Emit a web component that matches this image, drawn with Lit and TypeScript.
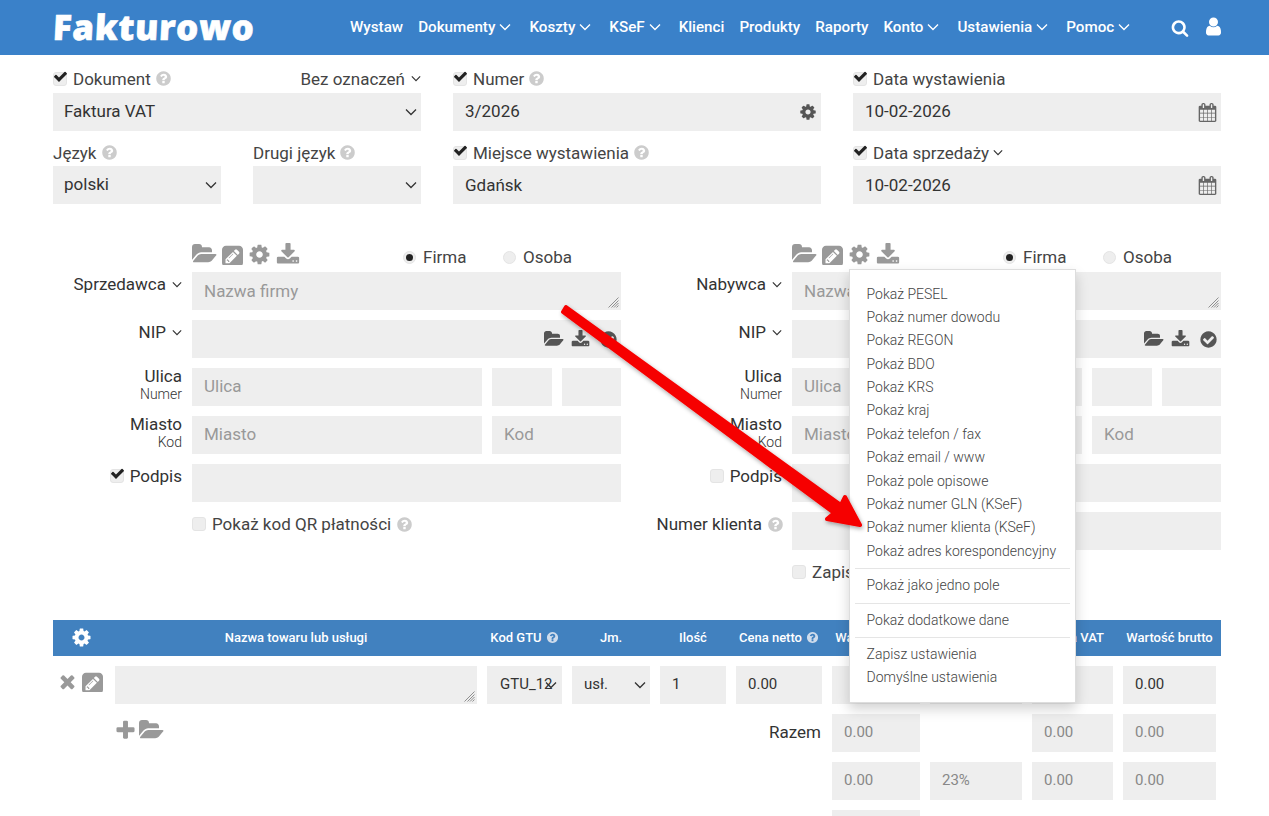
import { LitElement, html, css, svg } from 'lit';
import { customElement } from 'lit/decorators.js';

const P = {
  cog: 'M1152 896q0-106-75-181t-181-75-181 75-75 181 75 181 181 75 181-75 75-181zm512-109v222q0 12-8 23t-20 13l-185 28q-19 54-39 91 35 50 107 138 10 12 10 25t-9 23q-27 37-99 108t-94 71q-12 0-26-9l-138-108q-44 23-91 38-16 136-29 186-7 28-36 28h-222q-14 0-24.500-8.500t-11.500-21.500l-28-184q-49-16-90-37l-141 107q-10 9-25 9-14 0-25-11-126-114-165-168-7-10-7-23 0-12 8-23 15-21 51-66.500t54-70.500q-27-50-41-99l-183-27q-13-2-21-12.500t-8-23.500v-222q0-12 8-23t19-13l186-28q14-46 39-92-40-57-107-138-10-12-10-24 0-10 9-23 26-36 98.500-107.500t94.500-71.500q13 0 26 10l138 107q44-23 91-38 16-136 29-186 7-28 36-28h222q14 0 24.500 8.500t11.500 21.500l28 184q49 16 90 37l142-107q9-9 24-9 13 0 25 10 129 119 165 170 7 8 7 22 0 12-8 23-15 21-51 66.500t-54 70.500q26 50 41 98l183 28q13 2 21 12.500t8 23.500z',
  folder: 'M1879 952q0 31-31 66l-336 396q-43 51-120.500 86.500t-143.500 35.500h-1088q-34 0-60.500-13t-26.500-43q0-31 31-66l336-396q43-51 120.500-86.500t143.500-35.500h1088q34 0 60.500 13t26.500 43zm-343-344v160h-832q-94 0-197 47.500t-164 119.500l-337 396-5 6q0-4-.5-12.500t-.5-12.500v-960q0-92 66-158t158-66h320q92 0 158 66t66 158v32h544q92 0 158 66t66 158z',
  pencil: 'M404 1108l152 152-52 52h-56v-96h-96v-56zm414-390q14 13-3 30l-291 291q-17 17-30 3-14-13 3-30l291-291q17-17 30-3zm-274 690l544-544-288-288-544 544v288h288zm608-608l92-92q28-28 28-68t-28-68l-152-152q-28-28-68-28t-68 28l-92 92zm384-384v960q0 119-84.500 203.500t-203.500 84.500h-960q-119 0-203.500-84.500t-84.500-203.500v-960q0-119 84.500-203.500t203.500-84.500h960q119 0 203.500 84.500t84.500 203.500z',
  download: 'M1344 1344q0-26-19-45t-45-19-45 19-19 45 19 45 45 19 45-19 19-45zm256 0q0-26-19-45t-45-19-45 19-19 45 19 45 45 19 45-19 19-45zm128-224v320q0 40-28 68t-68 28h-1472q-40 0-68-28t-28-68v-320q0-40 28-68t68-28h465l135 136q58 56 136 56t136-56l136-136h464q40 0 68 28t28 68zm-325-569q17 41-14 70l-448 448q-18 19-45 19t-45-19l-448-448q-31-29-14-70 17-39 59-39h256v-448q0-26 19-45t45-19h256q26 0 45 19t19 45v448h256q42 0 59 39z',
  ok: 'M1412 734q0-28-18-46l-91-90q-19-19-45-19t-45 19l-408 407-226-226q-19-19-45-19t-45 19l-91 90q-18 18-18 46 0 27 18 45l362 362q19 19 45 19 27 0 46-19l543-543q18-18 18-45zm252 162q0 209-103 385.500t-279.500 279.500-385.500 103-385.500-103-279.500-279.500-103-385.500 103-385.500 279.500-279.500 385.500-103 385.500 103 279.500 279.500 103 385.500z',
  help: 'M1024 1376v-192q0-14-9-23t-23-9h-192q-14 0-23 9t-9 23v192q0 14 9 23t23 9h192q14 0 23-9t9-23zm256-672q0-88-55.500-163t-138.500-116-170-41q-243 0-371 213-15 24 8 42l132 100q7 6 19 6 16 0 25-12 53-68 86-92 34-24 86-24 48 0 85.500 26t37.500 59q0 38-20 61t-68 45q-63 28-115.500 86.500t-52.500 125.500v36q0 14 9 23t23 9h192q14 0 23-9t9-23q0-19 21.500-49.500t54.500-49.500q32-18 49-28.500t46-35 44.500-48 28-60.500 12.500-81zm384 192q0 209-103 385.500t-279.500 279.500-385.500 103-385.500-103-279.500-279.500-103-385.500 103-385.500 279.500-279.500 385.500-103 385.500 103 279.500 279.500 103 385.500z',
  search: 'M1216 832q0-185-131.500-316.500t-316.500-131.500-316.500 131.500-131.500 316.500 131.500 316.500 316.500 131.500 316.500-131.500 131.500-316.500zm512 832q0 52-38 90t-90 38q-54 0-90-38l-343-342q-179 124-399 124-143 0-273.500-55.500t-225-150-150-225-55.500-273.500 55.500-273.500 150-225 225-150 273.500-55.500 273.500 55.500 225 150 150 225 55.500 273.500q0 220-124 399l343 343q37 37 37 90z',
  user: 'M1536 1399q0 109-62.500 187t-150.500 78h-854q-88 0-150.500-78t-62.500-187q0-85 8.500-160.500t31.500-152 58.500-131 94-89 134.500-34.500q131 128 313 128t313-128q76 0 134.500 34.500t94 89 58.500 131 31.500 152 8.500 160.500zm-256-887q0 159-112.500 271.500t-271.500 112.500-271.500-112.500-112.500-271.500 112.500-271.500 271.500-112.500 271.500 112.500 112.500 271.500z',
  times: 'M1490 1322q0 40-28 68l-136 136q-28 28-68 28t-68-28l-294-294-294 294q-28 28-68 28t-68-28l-136-136q-28-28-28-68t28-68l294-294-294-294q-28-28-28-68t28-68l136-136q28-28 68-28t68 28l294 294 294-294q28-28 68-28t68 28l136 136q28 28 28 68t-28 68l-294 294 294 294q28 28 28 68z',
  plus: 'M1600 736v192q0 40-28 68t-68 28h-416v416q0 40-28 68t-68 28h-192q-40 0-68-28t-28-68v-416h-416q-40 0-68-28t-28-68v-192q0-40 28-68t68-28h416v-416q0-40 28-68t68-28h192q40 0 68 28t28 68v416h416q40 0 68 28t28 68z',
  calendar: 'M192 1664h288v-288h-288v288zm352 0h320v-288h-320v288zm-352-352h288v-320h-288v320zm352 0h320v-320h-320v320zm-352-384h288v-288h-288v288zm736 736h320v-288h-320v288zm-384-736h320v-288h-320v288zm768 736h288v-288h-288v288zm-384-352h320v-320h-320v320zm-352-864v-288q0-13-9.500-22.500t-22.500-9.500h-64q-13 0-22.500 9.500t-9.500 22.500v288q0 13 9.500 22.500t22.500 9.500h64q13 0 22.500-9.500t9.500-22.500zm736 864h288v-320h-288v320zm-384-384h320v-288h-320v288zm384 0h288v-288h-288v288zm32-480v-288q0-13-9.500-22.500t-22.500-9.500h-64q-13 0-22.500 9.500t-9.500 22.500v288q0 13 9.500 22.500t22.500 9.500h64q13 0 22.500-9.500t9.500-22.500zm384-64v1280q0 52-38 90t-90 38h-1408q-52 0-90-38t-38-90v-1280q0-52 38-90t90-38h128v-96q0-66 47-113t113-47h64q66 0 113 47t47 113v96h384v-96q0-66 47-113t113-47h64q66 0 113 47t47 113v96h128q52 0 90 38t38 90z',
  check: 'M1671 566q0 40-28 68l-724 724-136 136q-28 28-68 28t-68-28l-136-136-362-362q-28-28-28-68t28-68l136-136q28-28 68-28t68 28l294 295 656-657q28-28 68-28t68 28l136 136q28 28 28 68z',
};

const VB: Record<string, string> = { folder: '0 128 1920 1536', pencil: '0 0 1536 1536' };

const icon = (name: keyof typeof P, cls = '') =>
  html`<svg class="ic ${cls}" viewBox=${VB[name] ?? '0 0 1792 1792'} aria-hidden="true"><path d=${P[name]}></path></svg>`;

const chev = (cls = '') =>
  html`<svg class="chev ${cls}" viewBox="0 0 12 8" aria-hidden="true"><path d="M1 1.500 6 6.500 11 1.500" fill="none" stroke="currentColor" stroke-width="1.400"></path></svg>`;

const help = () => icon('help', 'help');

const check = (on: boolean) =>
  html`<span class="box">${on ? icon('check', 'tick') : ''}</span>`;

// textarea with the hatched resize grip of the original
const area = (placeholder = '') => html`
  <div class="ta">
    <textarea placeholder=${placeholder}></textarea>
    <svg class="grip" viewBox="0 0 11 11" aria-hidden="true">
      <path d="M10.500 .5 .5 10.500M10.500 3.500 3.500 10.500M10.500 6 6 10.500M10.500 8.500 8.500 10.500" fill="none" stroke="#777" stroke-width=".8"></path>
    </svg>
  </div>
`;

const NAV: [string, boolean][] = [
  ['Wystaw', false], ['Dokumenty', true], ['Koszty', true], ['KSeF', true], ['Klienci', false],
  ['Produkty', false], ['Raporty', false], ['Konto', true], ['Ustawienia', true], ['Pomoc', true],
];

const MENU = [
  ['Pokaż PESEL', 'Pokaż numer dowodu', 'Pokaż REGON', 'Pokaż BDO', 'Pokaż KRS', 'Pokaż kraj', 'Pokaż telefon / fax',
    'Pokaż email / www', 'Pokaż pole opisowe', 'Pokaż numer GLN (KSeF)', 'Pokaż numer klienta (KSeF)', 'Pokaż adres korespondencyjny'],
  ['Pokaż jako jedno pole'],
  ['Pokaż dodatkowe dane'],
  ['Zapisz ustawienia', 'Domyślne ustawienia'],
];

@customElement('app-root')
export class AppRoot extends LitElement {
  static styles = css`
    :host {
      display: block;
      position: relative;
      height: 816px;
      overflow: hidden;
      background: #fff;
      color: #333;
      font-family: Roboto, 'Liberation Sans', sans-serif;
      font-size: 17px;
    }
    * { box-sizing: border-box; }
    .ic { display: block; fill: currentColor; flex: none; }
    .chev { width: 11px; height: 7px; flex: none; }
    .chev.sm { width: 10px; height: 7px; margin-left: 4px; color: #333; }

    header {
      height: 55px;
      background: #3a81c9;
      color: #fff;
      display: flex;
      align-items: center;
      padding: 0 48px 0 53px;
    }
    .logo {
      width: 297px;
      font-family: 'Open Sans', sans-serif;
      font-weight: 800;
      font-size: 35px;
      letter-spacing: 0.6px;
      -webkit-text-stroke: 0.6px #fff;
      line-height: 55px;
      margin-top: -2px;
      transform: skewX(-3deg);
    }
    nav { display: flex; gap: 15px; font-size: 15.2px; font-weight: 500; margin-top: -2px; }
    nav a { display: flex; align-items: center; gap: 4px; }
    nav .chev { width: 12px; height: 8px; margin-right: 3px; }
    .tools { margin-left: auto; margin-right: -3px; display: flex; gap: 14px; align-items: center; }
    .tools .search { width: 18px; height: 18px; margin-top: 1px; }
    .tools .user { width: 21px; height: 21px; margin-top: -2px; }

    main { padding: 13px 48px 0 53px; }
    .top { display: grid; grid-template-columns: repeat(3, 368px); column-gap: 32px; row-gap: 10px; }
    .split { display: grid; grid-template-columns: 168px 168px; column-gap: 32px; }
    .lab {
      height: 25px;
      display: flex;
      align-items: center;
      gap: 6px;
      line-height: 22px;
      color: #444;
      padding-bottom: 2px;
    }
    .first .lab { padding-bottom: 4px; }
    .second input { padding-bottom: 0; }
    .lab .end { margin-left: auto; display: flex; align-items: center; }
    .lab .end .chev.sm { margin-left: 6px; }
    .lab > .chev.sm { margin-left: -2px; }
    .help { width: 17px; height: 17px; color: #ccc; }
    .lab .help { margin-left: -2px; }

    .box {
      position: relative;
      display: inline-block;
      width: 14px;
      height: 14px;
      border-radius: 3px;
      background: #eee;
      border: 1px solid #e4e4e4;
      flex: none;
    }
    .tick { position: absolute; left: -1px; top: -4px; width: 15px; height: 15px; color: #222; }

    input, select, textarea {
      display: block;
      width: 100%;
      height: 38px;
      border: 0;
      border-radius: 0;
      outline: 0;
      margin: 0;
      background-color: #eee;
      color: #333;
      font: inherit;
      padding: 0 12px 2px;
    }
    ::placeholder { color: #999; opacity: 1; }
    select {
      appearance: none;
      padding-left: 11px;
      background-image: url("data:image/svg+xml,%3Csvg xmlns='http://www.w3.org/2000/svg' width='12' height='8'%3E%3Cpath d='M1 1.500 6 6.500 11 1.500' fill='none' stroke='%23333' stroke-width='1.300'/%3E%3C/svg%3E");
      background-repeat: no-repeat;
      background-position: right 4px center;
    }
    textarea { resize: none; padding-top: 8px; line-height: 22px; vertical-align: top; }
    .ta { position: relative; height: 38px; }
    .grip { position: absolute; right: 2px; bottom: 2px; width: 11px; height: 11px; }

    .wrap { position: relative; }
    .wrap input { padding-right: 40px; }
    .wrap .inner {
      position: absolute;
      right: 4px;
      top: 0;
      height: 38px;
      display: flex;
      align-items: center;
      gap: 9px;
    }
    .wrap .inner.nip { right: 3px; }
    .gear { width: 18px; height: 18px; color: #555; }
    .cal { width: 19px; height: 19px; color: #666; }
    .inner .folder { width: 20px; height: 16px; color: #555; margin-right: -2px; }
    .inner .dl { width: 19px; height: 19px; color: #555; }
    .inner .ok { width: 19px; height: 19px; color: #555; }

    .parties {
      display: grid;
      grid-template-columns: 568px 568px;
      column-gap: 32px;
      margin-top: 36px;
    }
    .party {
      position: relative;
      display: grid;
      grid-template-columns: 129px 429px;
      column-gap: 10px;
      row-gap: 10px;
      align-content: start;
    }
    .tb-ic { display: flex; align-items: center; gap: 5px; width: 211px; height: 32px; padding-bottom: 4px; color: #999; }
    .tb-ic .folder { width: 25px; height: 20px; }
    .tb-ic .pen { width: 21px; height: 21px; }
    .tb-ic .cog { width: 23px; height: 23px; }
    .tb-ic .dl { width: 24px; height: 24px; margin-top: 1px; }
    .tb-row { height: 32px; margin-bottom: -10px; display: flex; align-items: center; grid-column: 2; }
    .radio-g { display: flex; align-items: center; gap: 7px; width: 100px; color: #444; padding-top: 2px; }
    .radio {
      width: 13px;
      height: 13px;
      border-radius: 50%;
      background: #eee;
      border: 1px solid #e4e4e4;
      display: flex;
      align-items: center;
      justify-content: center;
    }
    .radio.on::after { content: ''; width: 7px; height: 7px; border-radius: 50%; background: #222; }

    .rl {
      text-align: right;
      line-height: 24px;
      display: flex;
      flex-direction: column;
      align-items: flex-end;
    }
    .rl .ln { display: flex; align-items: center; gap: 6px; height: 24px; white-space: nowrap; }
    .rl .ln .sm { margin-left: 0; }
    .rl .help { margin: 0 -2px 0 -1px; }
    .rl.two .ln { margin-top: -4px; }
    .rl small { font-size: 14px; font-weight: 300; line-height: 12px; color: #333; }
    .cols { display: grid; column-gap: 10px; }
    .c-ulica { grid-template-columns: 290px 60px 59px; }
    .c-miasto { grid-template-columns: 290px 129px; }
    .row-check { display: flex; align-items: center; gap: 6px; height: 24px; color: #444; }
    .row-check .help { margin-left: -1px; }

    .menu {
      position: absolute;
      left: 195.500px;
      top: 29px;
      width: 227px;
      height: 434px;
      background: #fff;
      border: 1px solid #ddd;
      box-shadow: 0 6px 12px rgba(0, 0, 0, 0.18);
      padding: 12.500px 5px 13px;
      font-size: 14px;
      font-weight: 300;
      color: #444;
      z-index: 2;
    }
    .menu .it { height: 23.400px; line-height: 23.400px; padding-left: 12px; white-space: nowrap; }
    .menu hr { border: 0; border-top: 1px solid #e5e5e5; margin: 5px 0; }

    .tbl { margin-top: 36px; }
    .th, .tr {
      display: grid;
      grid-template-columns: 52px 362px 75px 78px 66px 86px 88px 92px 81px 93px;
      column-gap: 10px;
      padding-right: 5px;
    }
    .th {
      height: 36px;
      background: #4181bf;
      color: #fff;
      font-size: 13px;
      font-weight: 500;
      align-items: center;
      text-align: center;
      margin-bottom: 10px;
      padding-bottom: 1px;
    }
    .th > div { display: flex; justify-content: center; align-items: center; gap: 4px; white-space: nowrap; }
    .th .help { width: 13px; height: 13px; color: #cfdcec; }
    .th .cog { width: 21px; height: 21px; margin-left: 5px; }
    .tr { margin-bottom: 10px; align-items: start; }
    .tr input { font-size: 15px; }
    .tr input.dim { color: #888; }
    .tr select { padding: 0 12px 2px; font-size: 15px; }
    .tr select.tiny { padding: 0 0 2px 13px; background-position: right 5px center; }
    .row-ic { display: flex; align-items: center; gap: 4px; padding: 5px 0 0 4px; color: #999; }
    .row-ic .x { width: 21px; height: 21px; }
    .row-ic .pen { width: 21px; height: 21px; }
    .add { display: flex; align-items: center; gap: 2px; color: #999; height: 32px; }
    .add .pl { width: 23px; height: 23px; margin-left: -1px; }
    .add .folder { width: 25px; height: 20px; }
    .razem { text-align: right; line-height: 36px; padding-right: 1px; }

    .arrow { position: absolute; inset: 0; width: 1269px; height: 816px; pointer-events: none; z-index: 3; }
  `;

  private party(side: 'l' | 'r') {
    const left = side === 'l';
    return html`
      <section class="party">
        <div class="tb-row">
          <div class="tb-ic">
            ${icon('folder', 'folder')}${icon('pencil', 'pen')}${icon('cog', 'cog')}${icon('download', 'dl')}
          </div>
          <label class="radio-g"><span class="radio on"></span>Firma</label>
          <label class="radio-g"><span class="radio"></span>Osoba</label>
        </div>

        <div class="rl"><span class="ln">${left ? 'Sprzedawca' : 'Nabywca'}${chev('sm')}</span></div>
        ${area('Nazwa firmy')}

        <div class="rl"><span class="ln">NIP${chev('sm')}</span></div>
        <div class="wrap">
          <input />
          <div class="inner nip">${icon('folder', 'folder')}${icon('download', 'dl')}${icon('ok', 'ok')}</div>
        </div>

        <div class="rl two"><span class="ln">Ulica</span><small>Numer</small></div>
        <div class="cols c-ulica"><input placeholder="Ulica" /><input /><input /></div>

        <div class="rl two"><span class="ln">Miasto</span><small>Kod</small></div>
        <div class="cols c-miasto"><input placeholder="Miasto" /><input placeholder="Kod" /></div>

        <div class="rl"><span class="ln">${check(left)}Podpis</span></div>
        <input />

        ${left
          ? html`<div></div><div class="row-check">${check(false)}Pokaż kod QR płatności ${help()}</div>`
          : html`
              <div class="rl"><span class="ln">Numer klienta ${help()}</span></div>
              <input />
              <div></div>
              <div class="row-check">${check(false)}Zapisz</div>
              <div class="menu">
                ${MENU.map(
                  (group, i) => html`${i ? html`<hr />` : ''}${group.map((t) => html`<div class="it">${t}</div>`)}`
                )}
              </div>
            `}
      </section>
    `;
  }

  render() {
    return html`
      <header>
        <div class="logo">Fakturowo</div>
        <nav>${NAV.map(([t, sub]) => html`<a>${t}${sub ? chev() : ''}</a>`)}</nav>
        <div class="tools">${icon('search', 'search')}${icon('user', 'user')}</div>
      </header>

      <main>
        <div class="top">
          <div class="first">
            <div class="lab">${check(true)}Dokument ${help()}<span class="end">Bez oznaczeń${chev('sm')}</span></div>
            <select><option>Faktura VAT</option></select>
          </div>
          <div class="first">
            <div class="lab">${check(true)}Numer ${help()}</div>
            <div class="wrap"><input value="3/2026" /><div class="inner">${icon('cog', 'gear')}</div></div>
          </div>
          <div class="first">
            <div class="lab">${check(true)}Data wystawienia</div>
            <div class="wrap"><input value="10-02-2026" /><div class="inner">${icon('calendar', 'cal')}</div></div>
          </div>
          <div class="split">
            <div>
              <div class="lab">Język ${help()}</div>
              <select><option>polski</option></select>
            </div>
            <div>
              <div class="lab">Drugi język ${help()}</div>
              <select><option></option></select>
            </div>
          </div>
          <div class="second">
            <div class="lab">${check(true)}Miejsce wystawienia ${help()}</div>
            <input value="Gdańsk" />
          </div>
          <div class="second">
            <div class="lab">${check(true)}Data sprzedaży${chev('sm')}</div>
            <div class="wrap"><input value="10-02-2026" /><div class="inner">${icon('calendar', 'cal')}</div></div>
          </div>
        </div>

        <div class="parties">${this.party('l')}${this.party('r')}</div>

        <div class="tbl">
          <div class="th">
            <div>${icon('cog', 'cog')}</div>
            <div>Nazwa towaru lub usługi</div>
            <div>Kod GTU ${help()}</div>
            <div>Jm.</div>
            <div>Ilość</div>
            <div>Cena netto ${help()}</div>
            <div>Wartość netto</div>
            <div></div>
            <div>Kwota VAT</div>
            <div>Wartość brutto</div>
          </div>
          <div class="tr">
            <div class="row-ic">${icon('times', 'x')}${icon('pencil', 'pen')}</div>
            ${area()}
            <select class="tiny"><option>GTU_12</option></select>
            <select><option>usł.</option></select>
            <input value="1" />
            <input value="0.00" />
            <input />
            <input />
            <input />
            <input value="0.00" />
          </div>
          <div class="tr">
            <div></div>
            <div class="add">${icon('plus', 'pl')}${icon('folder', 'folder')}</div>
            <div></div><div></div><div></div>
            <div class="razem">Razem</div>
            <input class="dim" value="0.00" />
            <div></div>
            <input class="dim" value="0.00" />
            <input class="dim" value="0.00" />
          </div>
          <div class="tr">
            <div></div><div></div><div></div><div></div><div></div><div></div>
            <input class="dim" value="0.00" />
            <input class="dim" value="23%" />
            <input class="dim" value="0.00" />
            <input class="dim" value="0.00" />
          </div>
          <div class="tr">
            <div></div><div></div><div></div><div></div><div></div><div></div>
            <input class="dim" />
          </div>
        </div>
      </main>

      <svg class="arrow" viewBox="0 0 1269 816" aria-hidden="true">
        <defs>
          <filter id="sh" x="-10%" y="-10%" width="120%" height="120%">
            <feDropShadow dx="1" dy="2" stdDeviation="2" flood-color="#000" flood-opacity="0.35"></feDropShadow>
          </filter>
        </defs>
        ${svg`<path filter="url(#sh)" fill="#f60000" stroke="#f60000" stroke-width="4" stroke-linejoin="round"
          d="M563 312 566 307 841 505 845 497 860 525 827 519 834 513Z"></path>`}
      </svg>
    `;
  }
}
